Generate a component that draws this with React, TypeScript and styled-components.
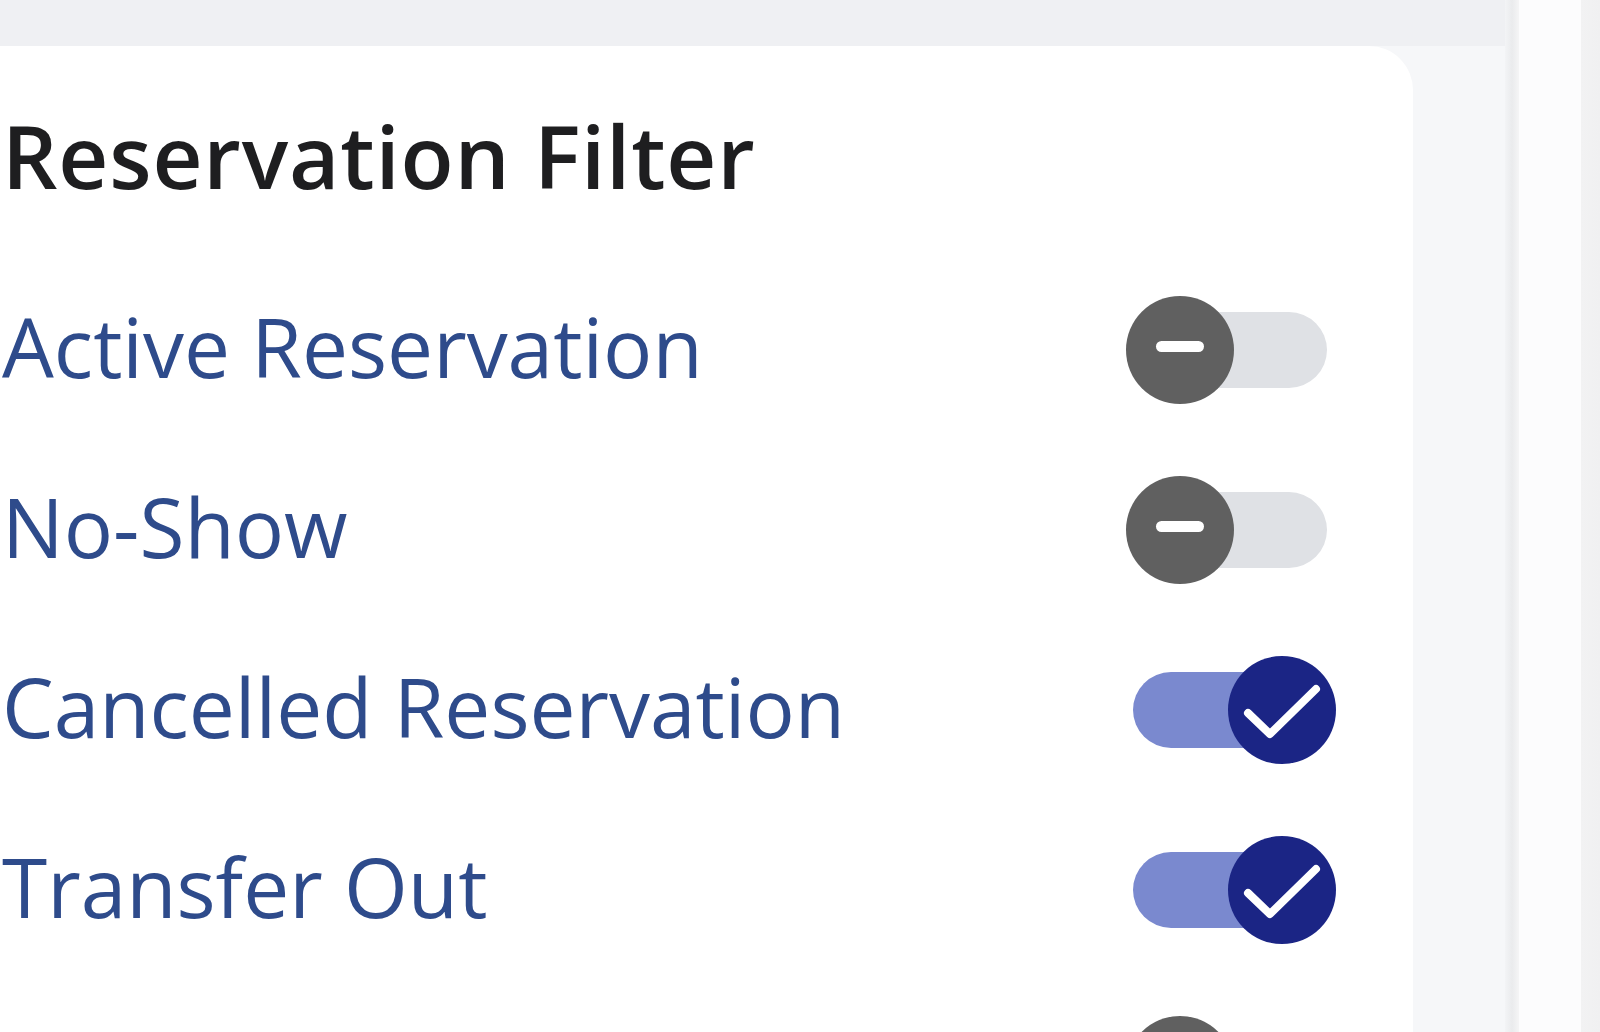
import React, { useState } from "react";
import styled, { createGlobalStyle } from "styled-components";

const GlobalStyle = createGlobalStyle`
  html, body {
    margin: 0;
    padding: 0;
    height: 100%;
    overflow: hidden;
    background: #f5f6f8;
  }
  #root {
    height: 100%;
  }
  * {
    box-sizing: border-box;
  }
`;

const Page = styled.div`
  display: flex;
  width: 100%;
  height: 1032px;
  overflow: hidden;
  font-family: "Open Sans", "Noto Sans", sans-serif;
`;

const Main = styled.div`
  display: flex;
  flex-direction: column;
  width: 1505px;
  flex-shrink: 0;
`;

const TopStrip = styled.div`
  height: 46px;
  flex-shrink: 0;
  background: #eff0f3;
`;

const Content = styled.div`
  display: flex;
  flex: 1;
  min-height: 0;
  background: #f6f7f9;
`;

const Card = styled.section`
  width: 1413px;
  flex-shrink: 0;
  background: #ffffff;
  border-top-right-radius: 44px;
  padding: 66px 77px 0 2px;
  display: flex;
  flex-direction: column;
`;

const Title = styled.h2`
  margin: 0;
  font-size: 87px;
  line-height: 1;
  font-weight: 600;
  color: #1e1e20;
  letter-spacing: 0.8px;
`;

const List = styled.ul`
  list-style: none;
  margin: 61px 0 0;
  padding: 0;
  display: grid;
  grid-auto-rows: 180px;
`;

const Row = styled.li`
  display: flex;
  align-items: center;
  justify-content: space-between;
`;

const Label = styled.span`
  font-size: 82px;
  line-height: 1;
  font-weight: 400;
  color: #2e4b8b;
  margin-top: -8px;
`;

const Divider = styled.div`
  width: 14px;
  flex-shrink: 0;
  background: linear-gradient(90deg, #f3f4f6 0%, #eaebed 50%, #f5f5f6 100%);
`;

const SidePanel = styled.div`
  width: 62px;
  flex-shrink: 0;
  background: #fcfcfd;
`;

const Edge = styled.div`
  flex: 1;
  background: linear-gradient(90deg, #f2f2f3 0%, #f0f0f1 100%);
`;

/* Toggle switch */

const SwitchRoot = styled.button`
  position: relative;
  width: 210px;
  height: 108px;
  flex-shrink: 0;
  padding: 0;
  border: 0;
  background: transparent;
  cursor: pointer;
`;

const Track = styled.span<{ $on: boolean }>`
  position: absolute;
  left: 7px;
  right: 9px;
  top: 16px;
  height: 76px;
  border-radius: 38px;
  background: ${(p) => (p.$on ? "#7a89cf" : "#dfe1e5")};
`;

const Thumb = styled.span<{ $on: boolean }>`
  position: absolute;
  top: 0;
  left: ${(p) => (p.$on ? "102px" : "0")};
  width: 108px;
  height: 108px;
  border-radius: 50%;
  background: ${(p) => (p.$on ? "#1b2585" : "#606060")};
  display: flex;
  align-items: center;
  justify-content: center;
  transition: left 0.15s ease;
`;

const CheckIcon = () => (
  <svg width="108" height="108" viewBox="0 0 108 108" aria-hidden="true">
    <polyline
      points="20,57 42,78 88,33"
      fill="none"
      stroke="#ffffff"
      strokeWidth="8"
      strokeLinecap="round"
      strokeLinejoin="round"
    />
  </svg>
);

const MinusIcon = () => (
  <svg width="108" height="108" viewBox="0 0 108 108" aria-hidden="true">
    <rect x="30" y="45" width="48" height="11" rx="5.5" fill="#ffffff" />
  </svg>
);

const Toggle = ({ on, onChange }: { on: boolean; onChange: () => void }) => (
  <SwitchRoot role="switch" aria-checked={on} onClick={onChange}>
    <Track $on={on} />
    <Thumb $on={on}>{on ? <CheckIcon /> : <MinusIcon />}</Thumb>
  </SwitchRoot>
);

const initialFilters = [
  { id: "active", label: "Active Reservation", on: false },
  { id: "noshow", label: "No-Show", on: false },
  { id: "cancelled", label: "Cancelled Reservation", on: true },
  { id: "transferOut", label: "Transfer Out", on: true },
  { id: "transferIn", label: "Transfer In", on: false },
];

export default function App() {
  const [filters, setFilters] = useState(initialFilters);

  const toggle = (id: string) =>
    setFilters((list) => list.map((f) => (f.id === id ? { ...f, on: !f.on } : f)));

  return (
    <>
      <GlobalStyle />
      <Page>
        <Main>
          <TopStrip />
          <Content>
            <Card>
              <Title>Reservation Filter</Title>
              <List>
                {filters.map((f) => (
                  <Row key={f.id}>
                    <Label>{f.label}</Label>
                    <Toggle on={f.on} onChange={() => toggle(f.id)} />
                  </Row>
                ))}
              </List>
            </Card>
          </Content>
        </Main>
        <Divider />
        <SidePanel />
        <Edge />
      </Page>
    </>
  );
}
